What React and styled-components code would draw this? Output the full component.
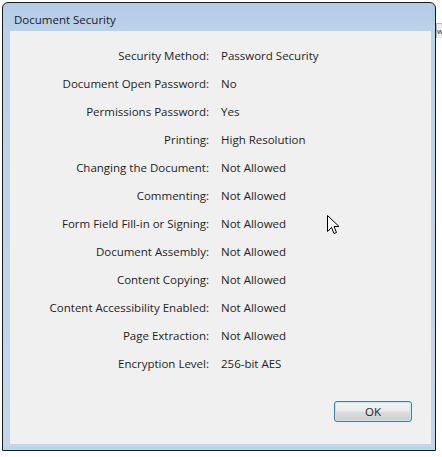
import React from "react";
import styled, { createGlobalStyle } from "styled-components";

const Global = createGlobalStyle`
  html, body { margin: 0; padding: 0; background: #ffffff; }
  body { font-family: "Open Sans", "Noto Sans", sans-serif; }
`;

const Page = styled.div`
  position: relative;
  width: 442px;
  height: 457px;
  overflow: hidden;
  background: #ffffff;
  padding: 2px 0 0 2px;
  box-sizing: border-box;
`;

const Window = styled.div`
  width: 434px;
  height: 449px;
  box-sizing: border-box;
  border: 1px solid #1b1b1b;
  border-radius: 6px 6px 0 0;
  background: linear-gradient(180deg, #b3cbe6 0px, #bcd2ea 28px, #c2d6ec 100%);
  display: flex;
  flex-direction: column;
  padding: 0 4px 6px 7px;
  box-shadow: inset 0 -3px 0 #a9dbf2;
`;

const TitleBar = styled.div`
  height: 28px;
  display: flex;
  align-items: center;
  padding-left: 4px;
  padding-top: 5px;
  box-sizing: border-box;
  font-family: "Open Sans", "Noto Sans", sans-serif;
  font-size: 11.5px;
  color: #1a1a28;
`;

const Content = styled.div`
  flex: 1;
  background: #f0f0f0;
  display: flex;
  flex-direction: column;
  padding: 10px 19px 22px 0;
`;

const Table = styled.div`
  display: grid;
  grid-template-columns: 199px 1fr;
  column-gap: 12px;
  grid-auto-rows: 28px;
  font-family: "Open Sans", "Noto Sans", sans-serif;
  font-size: 11.5px;
  color: #1e1e1e;
`;

const Label = styled.div`
  text-align: right;
  display: flex;
  align-items: center;
  justify-content: flex-end;
  white-space: nowrap;
`;

const Value = styled.div`
  display: flex;
  align-items: center;
  white-space: nowrap;
`;

const Footer = styled.div`
  margin-top: auto;
  display: flex;
  justify-content: flex-end;
`;

const Button = styled.button`
  width: 78px;
  height: 21px;
  box-sizing: border-box;
  border: 1px solid #3c7fb1;
  border-radius: 3px;
  background: linear-gradient(180deg, #f2f2f2 0%, #ebebeb 48%, #dddddd 52%, #cfcfcf 100%);
  box-shadow: inset 0 0 0 1px #c7e6f5;
  font-family: "Open Sans", "Noto Sans", sans-serif;
  font-size: 11.5px;
  color: #1e1e1e;
  padding: 0;
`;

const SideTab = styled.div`
  position: absolute;
  left: 436px;
  top: 23px;
  width: 6px;
  height: 15px;
  box-sizing: border-box;
  background: #ececec;
  border-left: 1px solid #bdbdbd;
  border-top: 1px solid #bdbdbd;
  font-family: "Open Sans", sans-serif;
  font-size: 8px;
  line-height: 14px;
  color: #333;
  padding-left: 0;
`;

const Cursor = styled.svg`
  position: absolute;
  left: 327px;
  top: 215px;
`;

const rows = [
  ["Security Method:", "Password Security"],
  ["Document Open Password:", "No"],
  ["Permissions Password:", "Yes"],
  ["Printing:", "High Resolution"],
  ["Changing the Document:", "Not Allowed"],
  ["Commenting:", "Not Allowed"],
  ["Form Field Fill-in or Signing:", "Not Allowed"],
  ["Document Assembly:", "Not Allowed"],
  ["Content Copying:", "Not Allowed"],
  ["Content Accessibility Enabled:", "Not Allowed"],
  ["Page Extraction:", "Not Allowed"],
  ["Encryption Level:", "256-bit AES"],
];

export default function App() {
  return (
    <>
      <Global />
      <Page>
        <Window>
          <TitleBar>Document Security</TitleBar>
          <Content>
            <Table>
              {rows.map(([l, v]) => (
                <React.Fragment key={l}>
                  <Label>{l}</Label>
                  <Value>{v}</Value>
                </React.Fragment>
              ))}
            </Table>
            <Footer>
              <Button>OK</Button>
            </Footer>
          </Content>
        </Window>
        <SideTab>w</SideTab>
        <Cursor width="13" height="21" viewBox="0 0 13 21">
          <path
            d="M0.5 0.5 L0.5 16.5 L4.5 12.5 L7 18.5 L9.5 17.5 L7 11.5 L12 11.5 Z"
            fill="#ffffff"
            stroke="#000000"
            strokeWidth="1"
            strokeLinejoin="miter"
          />
        </Cursor>
      </Page>
    </>
  );
}
